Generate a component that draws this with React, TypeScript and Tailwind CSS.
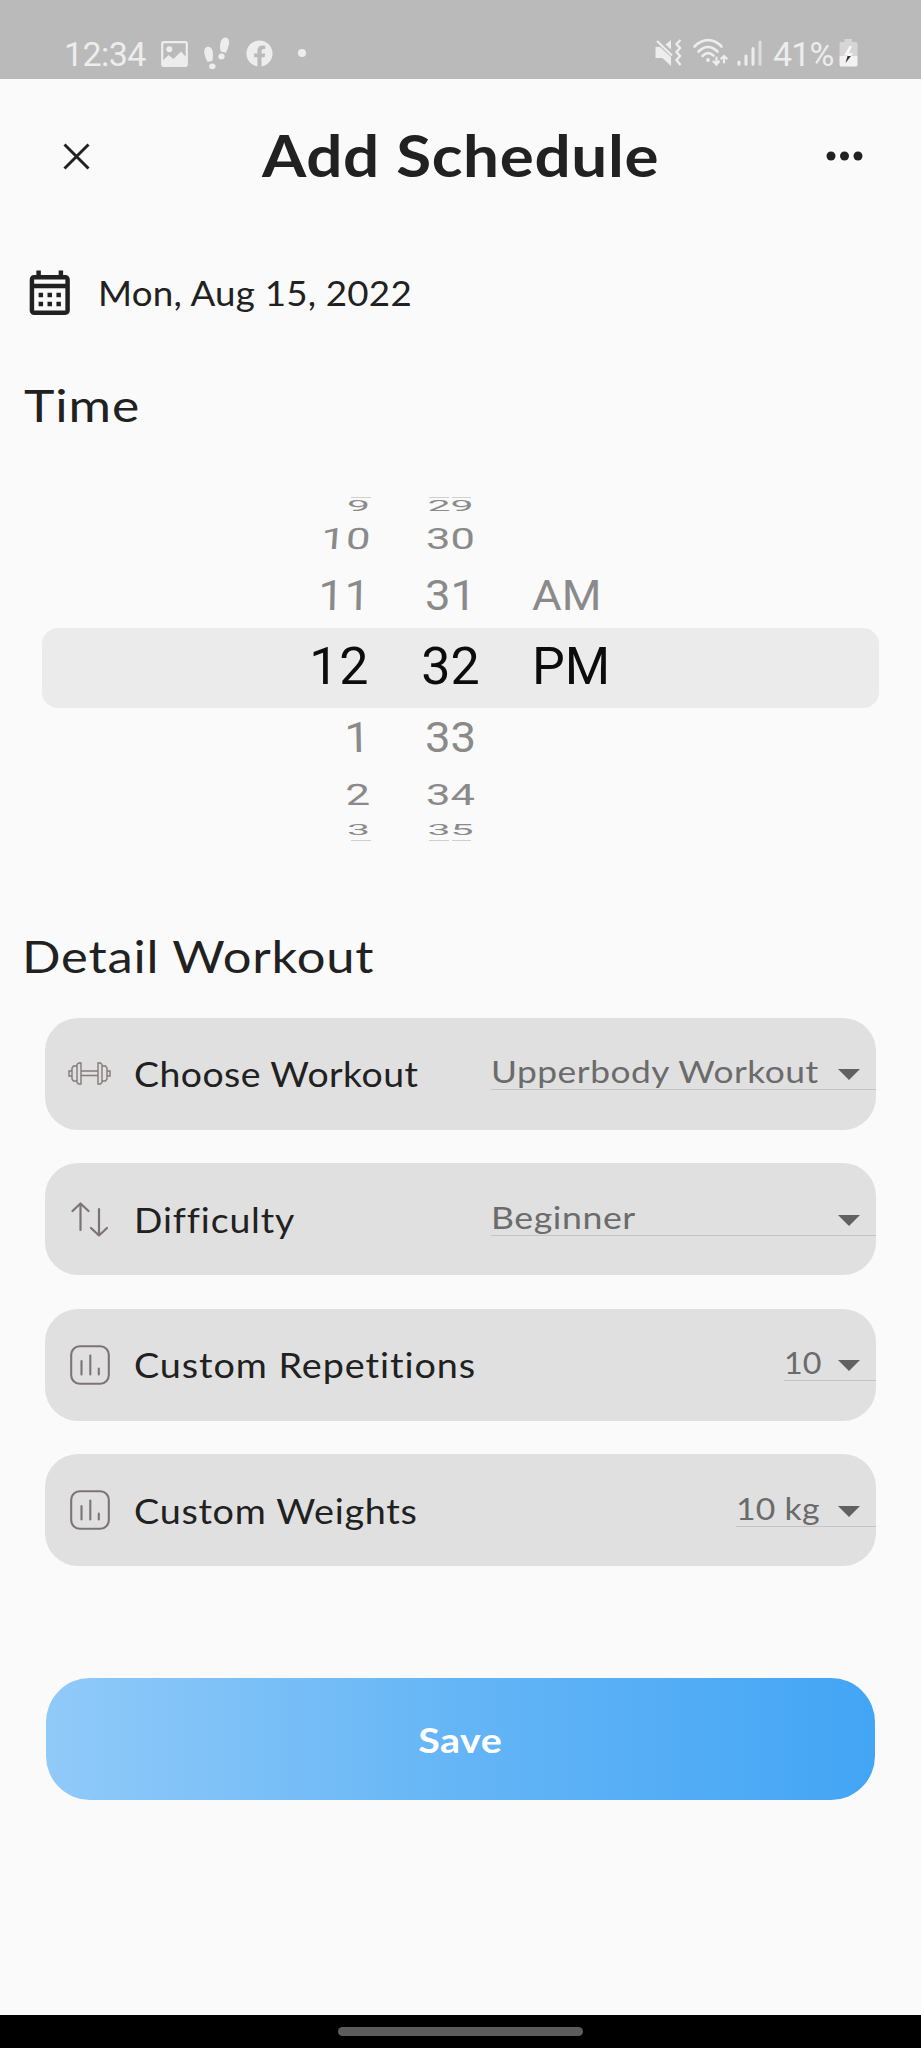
import React from "react";
import { FaFacebook } from "react-icons/fa";
import { MdOutlineCalendarMonth } from "react-icons/md";

function StatusBar() {
  return (
    <header className="flex h-[79px] shrink-0 items-start bg-[#bababa] pl-[64px] pt-[34px] font-['Roboto',sans-serif] text-[34px] leading-[40px] text-[#ededed]">
      <span className="w-[97px] tracking-[-0.6px]">12:34</span>
      <svg className="mt-[7px] h-[26px] w-[27px]" viewBox="0 0 27 26" fill="none">
        <rect x="1.2" y="1.2" width="24.6" height="23.6" rx="1.5" stroke="currentColor" strokeWidth="2.2" />
        <circle cx="8.3" cy="8.3" r="3" fill="currentColor" />
        <path d="M1.5 25V20L7.5 14L12.5 18L20 10.5L26 17V25Z" fill="currentColor" />
      </svg>
      <svg className="ml-[16px] mt-[3px] h-[33px] w-[27px]" viewBox="0 0 27 33" fill="currentColor">
        <path d="M16.300 12.500C15.300 6 17.500 0.500 21.500 0.500C25.500 0.500 26 6 24 10.500C23.200 13 22.800 14.500 21.800 15.800L16.800 14.500Z" />
        <ellipse cx="17.500" cy="19.600" rx="3.200" ry="3" />
        <path d="M1 19C-0.800 14 0.500 9.800 4.200 9.800C8 9.800 9.600 15 8.800 20L8.600 23.800L3.500 25C2.800 23 1.800 21.500 1 19Z" />
        <ellipse cx="8.300" cy="29.300" rx="3.200" ry="2.900" />
      </svg>
      <FaFacebook className="ml-[15px] mt-[6px] size-[27px]" />
      <span className="ml-[25px] mt-[15px] size-[8px] rounded-full bg-[#ededed]" />
      <div className="ml-auto flex items-start pr-[63px]">
        <svg className="mt-[5px] h-[27px] w-[27px]" viewBox="0 0 27 27" fill="currentColor">
          <path d="M0.500 8H5L16 18V27L7.500 19H0.500Z" />
          <path d="M10.500 5.500L16 1V10.500Z" />
          <path d="M2 2L17 16.500" stroke="currentColor" strokeWidth="2.200" />
          <path d="M25.500 1L21.500 5L25 9L21.500 13L25 17L21.500 21L25.500 26" fill="none" stroke="currentColor" strokeWidth="2.400" />
        </svg>
        <svg className="ml-[11px] mt-[4px] h-[29px] w-[35px]" viewBox="0 0 35 29" fill="none" stroke="currentColor" strokeWidth="2.600" strokeLinecap="round">
          <path d="M1.500 8.500C10 0 20.500 0 28.500 8.500" />
          <path d="M5.500 13.500C11.500 7.500 18.500 7.500 24.500 13.500" />
          <path d="M9.500 18C13 14.500 17 14.500 20.500 17.500" />
          <circle cx="15" cy="22" r="1.200" fill="currentColor" strokeWidth="1.500" />
          <path d="M23.500 19.500V26.500M20.500 23.500L23.500 26.500L26 23.500M31 24.500V18M28.300 20.500L31 18L33.700 20.500" strokeWidth="2.200" />
        </svg>
        <svg className="ml-[9px] mt-[6px] h-[27px] w-[25px]" viewBox="0 0 25 27" fill="none" stroke="currentColor" strokeWidth="3" strokeLinecap="round">
          <path d="M2 22V24.300M9 16V24.300M16 8.500V24.300" />
          <path d="M23 2V24.300" stroke="#dedede" />
        </svg>
        <span className="ml-[11px] w-[66px] whitespace-nowrap tracking-[-0.8px]">41%</span>
        <svg className="mt-[5px] h-[28px] w-[19px]" viewBox="0 0 19 28">
          <path d="M5.500 0H13V3H17Q18.500 3 18.500 4.500V17H0.500V4.500Q0.500 3 2 3H5.500Z" fill="#d6d6d6" />
          <path d="M0.500 17H18.500V25.500Q18.500 27.500 17 27.500H2Q0.500 27.500 0.500 25.500Z" fill="#f2f2f2" />
          <path d="M10.500 7L5 16.500H9L7 24L14 14H10L13 7Z" fill="#f7f7f7" />
          <path d="M6.500 17H12L6.500 24L8.500 17Z" fill="#333" />
        </svg>
      </div>
    </header>
  );
}

const wheel = [
  { h: "9", m: "29", p: "", row: "h-[16px]", text: "text-[41px] scale-y-[0.340]", hour: "pr-[1px]" },
  { h: "10", m: "30", p: "", row: "h-[50px] pt-[1px]", text: "text-[43.500px] scale-y-[0.680]", hour: "-skew-x-3 tracking-[0.500px]" },
  { h: "11", m: "31", p: "AM", row: "h-[64px]", text: "text-[45.500px] scale-y-[0.920]", hour: "-skew-x-1 tracking-[0.800px]" },
  { h: "12", m: "32", p: "PM", row: "h-[80px] rounded-[16px] bg-[#ebebeb] pb-[2px]", text: "text-[52px]", hour: "pr-[2px] tracking-[0.600px]" },
  { h: "1", m: "33", p: "", row: "h-[61px] pb-[1px]", text: "text-[45.500px] scale-y-[0.920]", hour: "skew-x-1 pr-[1px]" },
  { h: "2", m: "34", p: "", row: "h-[52px] pt-[1px]", text: "text-[43.500px] scale-y-[0.680]", hour: "skew-x-1 pr-[1px]" },
  { h: "3", m: "35", p: "", row: "h-[18px]", text: "text-[41px] scale-y-[0.340]", hour: "pr-[1px]" },
];

function WheelEdge() {
  return (
    <div className="flex h-[2px] items-center">
      <div className="ml-[309px] h-px w-[20px] bg-[#cfcfcf]" />
      <div className="ml-[58px] h-px w-[20px] bg-[#cfcfcf]" />
      <div className="ml-[3px] h-px w-[19px] bg-[#cfcfcf]" />
    </div>
  );
}

function TimeWheel() {
  return (
    <div className="mx-[42px] mt-[39px] font-['Roboto',sans-serif]">
      <WheelEdge />
      {wheel.map((r) => (
        <div key={r.m} className={`flex items-center ${r.row}`}>
          <div className={`flex flex-1 items-center leading-none ${r.text} ${r.m === "32" ? "text-[#0c0c0c]" : "text-[#8a8a8a]"}`}>
            <span className={`w-[329px] text-right ${r.hour}`}>{r.h}</span>
            <span className="w-[161px] pr-[2px] text-center">{r.m}</span>
            <span className="flex-1">{r.p}</span>
          </div>
        </div>
      ))}
      <WheelEdge />
    </div>
  );
}

function Dumbbell() {
  return (
    <svg className="h-[23px] w-[43px]" viewBox="0 0 43 23" fill="none" stroke="#847a7a" strokeWidth="1.400">
      <path d="M13 9H30M13 13.500H30M13 1H10.500L9 2.500V20.500L10.500 22H13ZM30 1H32.500L34 2.500V20.500L32.500 22H30ZM9 4H5.500L4 6V17L5.500 19H9M34 4H37.500L39 6V17L37.500 19H34M4 9H1V14H4M39 9H42V14H39" />
    </svg>
  );
}

function Arrows() {
  return (
    <svg className="h-[35px] w-[37px]" viewBox="0 0 37 35" fill="none" stroke="#7c7474" strokeWidth="2.200" strokeLinecap="round" strokeLinejoin="round">
      <path d="M9.500 28V1.500M1.500 9L9.500 1.500L17.500 9M28 7V33.500M20 26L28 33.500L36 26" />
    </svg>
  );
}

function Chart() {
  return (
    <svg className="size-[40px]" viewBox="0 0 40 40" fill="none" stroke="#7c7474" strokeWidth="2.100" strokeLinecap="round">
      <rect x="1.200" y="1.200" width="37.600" height="37.600" rx="8.500" />
      <path d="M11.500 16V29.500M20.300 10.500V29.500M28.800 23.500V29.500" />
    </svg>
  );
}

const fields = [
  { label: "Choose Workout", value: "Upperbody Workout", icon: <Dumbbell />, w: "w-[385px]", ls: "scale-x-[1.1] tracking-[0.400px]", vs: "scale-x-[1.14] tracking-[0.450px]" },
  { label: "Difficulty", value: "Beginner", icon: <Arrows />, w: "w-[385px]", ls: "scale-x-[1.1] tracking-[0.800px]", vs: "scale-x-[1.15] tracking-[0.500px]" },
  { label: "Custom Repetitions", value: "10", icon: <Chart />, w: "w-[92px]", ls: "scale-x-[1.11] tracking-[0.850px]", vs: "scale-x-[1.04] tracking-[0px]" },
  { label: "Custom Weights", value: "10 kg", icon: <Chart />, w: "w-[140px]", ls: "scale-x-[1.11] tracking-[0.650px]", vs: "scale-x-[1.09] tracking-[0.200px]" },
];

export default function App() {
  return (
    <div className="flex h-[2048px] w-[921px] flex-col overflow-hidden bg-[#fafafa] font-['Lato',sans-serif] text-[#212121]">
      <StatusBar />
      <div className="flex h-[154px] shrink-0 items-center justify-between pl-[63px] pr-[58px]">
        <svg className="size-[27px]" viewBox="0 0 27 27" stroke="currentColor" strokeWidth="3">
          <path d="M1.500 1.500L25.500 25.500M25.500 1.500L1.500 25.500" />
        </svg>
        <h1 className="pb-[4px] pl-[5px] text-[58px] font-bold">
          <span className="inline-block scale-x-[1.1] tracking-[0.600px]">Add Schedule</span>
        </h1>
        <svg className="h-[10px] w-[37px]" viewBox="0 0 37 10" fill="currentColor">
          <circle cx="5" cy="5" r="4.500" />
          <circle cx="18.500" cy="5" r="4.500" />
          <circle cx="32" cy="5" r="4.500" />
        </svg>
      </div>
      <div className="flex h-[120px] shrink-0 items-center pl-[22.500px]">
        <MdOutlineCalendarMonth className="size-[53.500px]" />
        <span className="mb-[2px] ml-[22px] origin-left scale-x-[1.08] text-[34px] tracking-[0.200px]">Mon, Aug 15, 2022</span>
      </div>
      <h2 className="flex h-[104px] shrink-0 items-center pl-[24px] text-[44.500px]">
        <span className="origin-left scale-x-[1.16] tracking-[0.800px]">Time</span>
      </h2>
      <TimeWheel />
      <h2 className="mt-[52.500px] flex h-[124px] shrink-0 items-center pl-[22px] pt-[1px] text-[44.500px]">
        <span className="origin-left scale-x-[1.14] tracking-[0.700px]">Detail Workout</span>
      </h2>
      <div className="mx-[45px] flex flex-col gap-[33.600px]">
        {fields.map((f) => (
          <div key={f.label} className="flex h-[112px] items-center rounded-[33px] bg-[#e0e0e0]">
            <div className="flex w-[89px] justify-center">{f.icon}</div>
            <span className={`origin-left text-[34px] ${f.ls}`}>{f.label}</span>
            <div className={`mb-[3px] ml-auto flex h-[36px] items-center border-b border-[#c4c4c4] pr-[16px] text-[31px] text-[#6b6b6b] ${f.w}`}>
              <span className={`origin-left whitespace-nowrap ${f.vs}`}>{f.value}</span>
              <svg className="ml-auto mt-[6px] h-[11px] w-[22px] shrink-0" viewBox="0 0 22 11" fill="#616161">
                <path d="M0 0H22L11 11Z" />
              </svg>
            </div>
          </div>
        ))}
      </div>
      <button className="mx-[46px] mt-[112px] h-[121.400px] shrink-0 rounded-[44px] bg-linear-to-r from-[#90caf9] via-[#64b5f6] to-[#42a5f5] pt-[1px] text-[34px] font-bold text-white">
        <span className="inline-block scale-x-[1.16] tracking-[0.400px]">Save</span>
      </button>
      <footer className="mt-auto flex h-[33.300px] shrink-0 items-start justify-center bg-black pt-[12px]">
        <div className="h-[9px] w-[245px] rounded-full bg-[#5c5c5c]" />
      </footer>
    </div>
  );
}
